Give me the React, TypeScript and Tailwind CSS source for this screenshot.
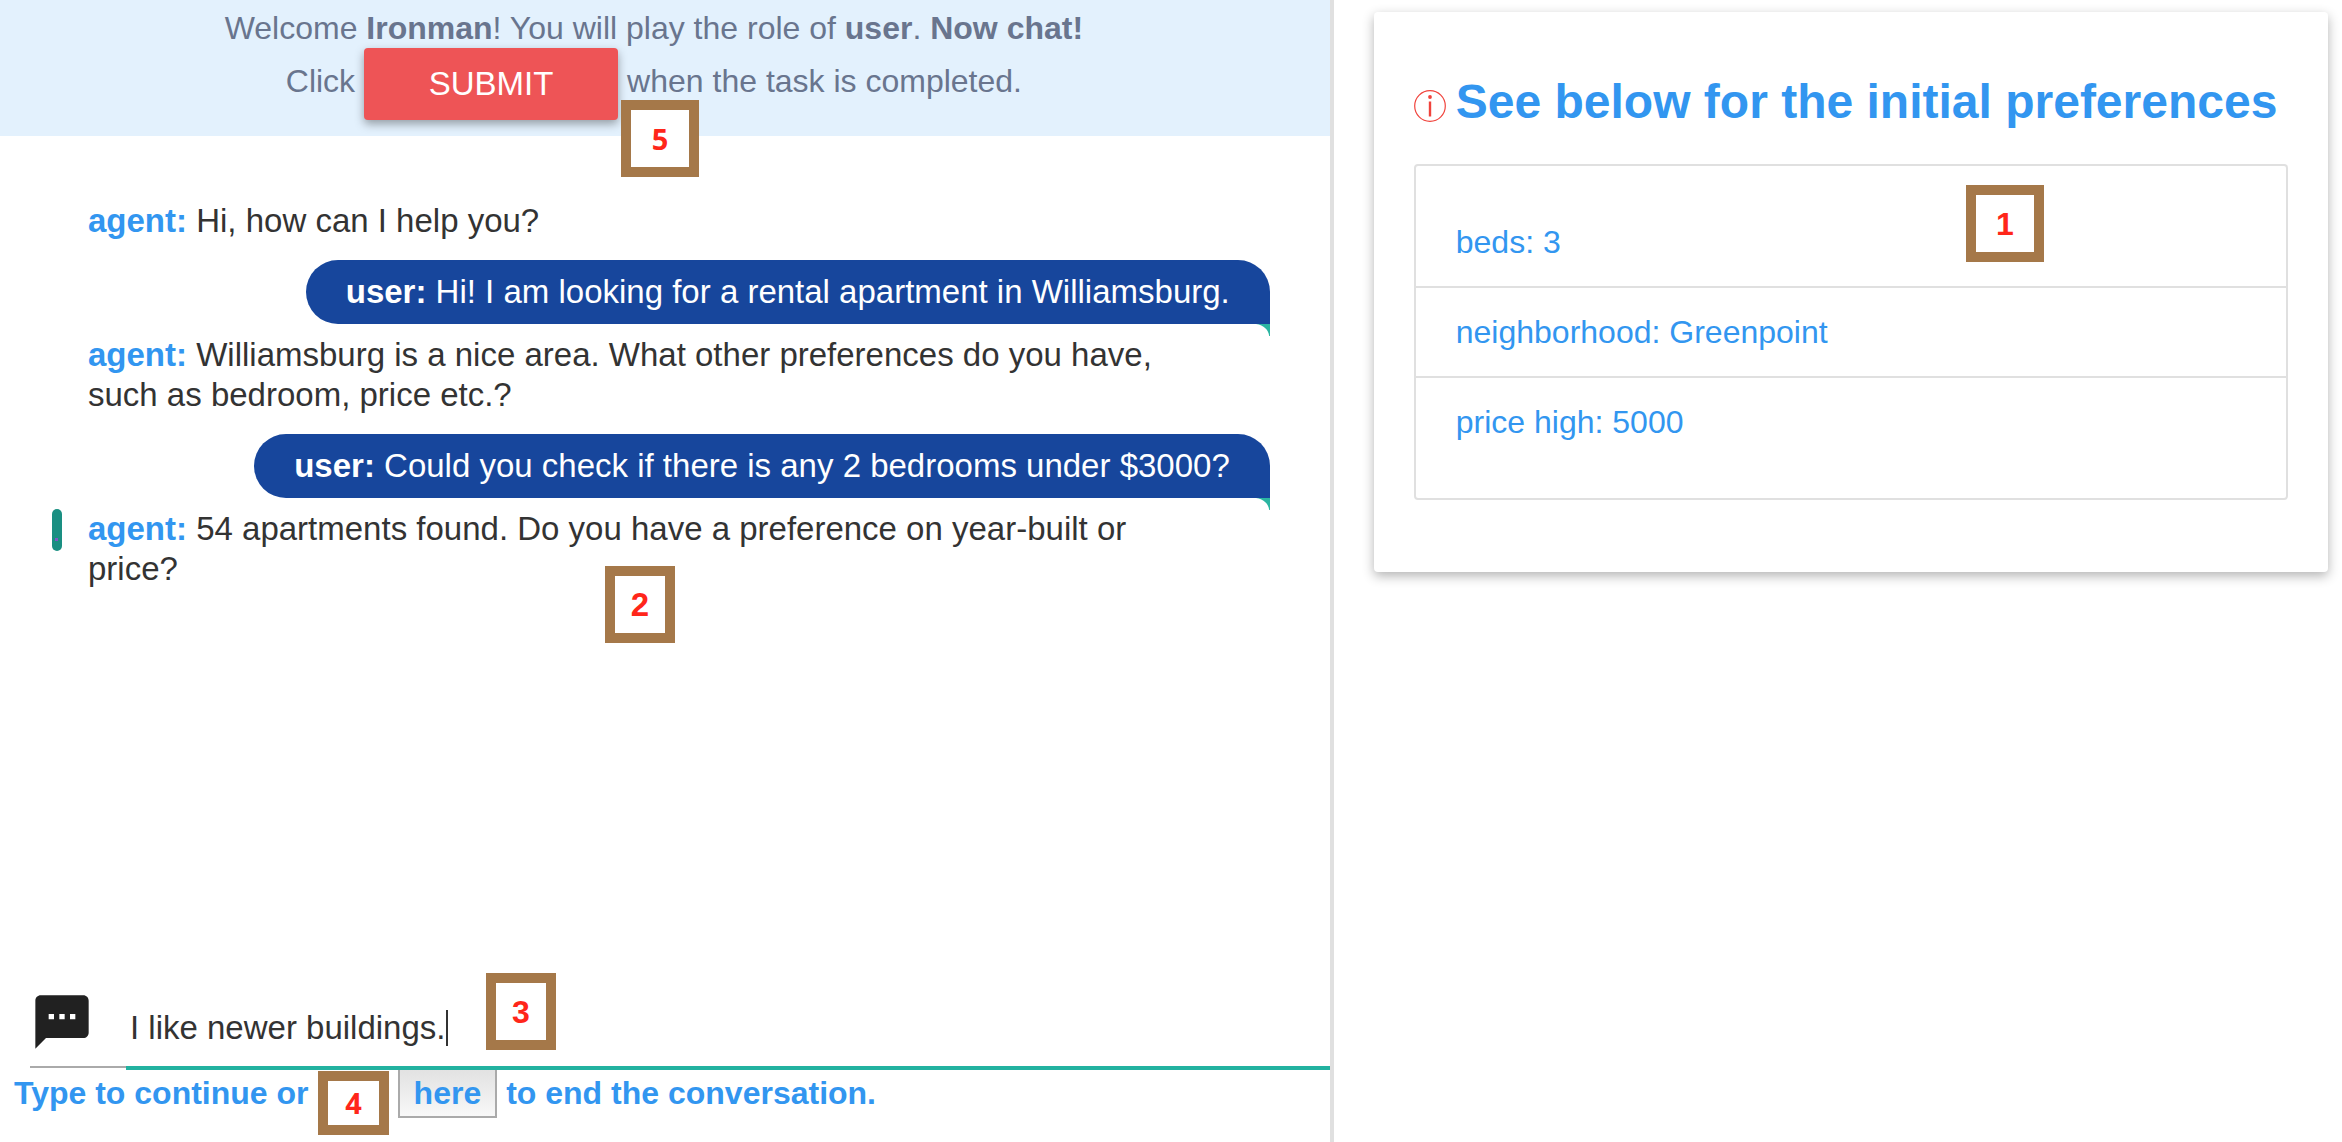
import type { ReactNode } from "react";
import { MdTextsms } from "react-icons/md";

function Marker({ n, className }: { n: number; className: string }) {
  return (
    <div
      className={`absolute z-20 flex items-center justify-center border-[10px] border-[#a57849] bg-white font-bold text-[#ff261a] ${className}`}
    >
      {n}
    </div>
  );
}

function AgentMessage({ children, current = false }: { children: ReactNode; current?: boolean }) {
  return (
    <div className="relative max-w-[1110px] text-[#333333]">
      {current && (
        <span className="absolute top-0 -left-9 h-[42px] w-[10px] rounded-full bg-[#1a8f82]">
          <span className="absolute bottom-[10px] left-[3px] size-[3px] bg-[#7e57c2]" />
        </span>
      )}
      <b className="text-[#3296f0]">agent:</b> {children}
    </div>
  );
}

function UserMessage({ children }: { children: ReactNode }) {
  return (
    <div className="relative mt-[19px] mb-[11px] self-end rounded-[32px] rounded-br-none bg-[#17469c] px-10 py-3 text-white">
      <b>user:</b> {children}
      <svg className="absolute top-full right-0 h-3 w-[14px]" viewBox="0 0 14 12" aria-hidden="true">
        <path d="M0 0H14V12H13.2C12.5 6 8 1 0 0Z" fill="#2bb5a2" />
      </svg>
    </div>
  );
}

function InfoIcon() {
  return (
    <svg className="mb-[10px] size-8 shrink-0 self-end" viewBox="0 0 32 32" fill="none" aria-hidden="true">
      <circle cx="16" cy="16" r="15.3" stroke="#f0433c" strokeWidth="1.2" />
      <circle cx="16" cy="7" r="1.9" fill="#f0433c" />
      <path d="M16 11.5V26.5" stroke="#f0433c" strokeWidth="2.4" />
    </svg>
  );
}

export default function App() {
  return (
    <div className="flex min-h-screen bg-white font-['Liberation_Sans',Arial,sans-serif] text-[32px] leading-10">
      <main className="flex w-[56.95%] flex-col border-r-4 border-[#e0e0e0]">
        <header className="relative bg-[#e3f1fd] pt-2 pr-[22px] pb-4 text-center text-[#69758e]">
          <p>
            Welcome <b>Ironman</b>! You will play the role of <b>user</b>. <b>Now chat!</b>
          </p>
          <div className="flex items-start justify-center gap-[9px] leading-[66px]">
            <span>Click</span>
            <button
              type="button"
              className="h-[72px] w-[254px] rounded bg-[#ee5456] text-[33px] leading-[72px] text-white shadow-[0_4px_10px_rgba(0,0,0,0.35)]"
            >
              SUBMIT
            </button>
            <span>when the task is completed.</span>
          </div>
          <Marker n={5} className="top-[100px] left-[621px] h-[77px] w-[78px] font-['Open_Sans',sans-serif] text-[29px]" />
        </header>

        <section className="relative flex flex-1 flex-col pt-[65px] pr-[60px] pl-[88px] text-[33px]">
          <AgentMessage>Hi, how can I help you?</AgentMessage>
          <UserMessage>Hi! I am looking for a rental apartment in Williamsburg.</UserMessage>
          <AgentMessage>
            Williamsburg is a nice area. What other preferences do you have, such as bedroom, price etc.?
          </AgentMessage>
          <UserMessage>Could you check if there is any 2 bedrooms under $3000?</UserMessage>
          <AgentMessage current>
            54 apartments found. Do you have a preference on year-built or price?
          </AgentMessage>
          <Marker n={2} className="top-[430px] left-[605px] h-[77px] w-[70px]" />
        </section>

        <footer className="relative">
          <div className="relative z-10 flex items-start pl-[30px]">
            <label htmlFor="message" className="w-24 border-b-2 border-[#aaaaaa] pb-3" aria-label="Message">
              <MdTextsms className="size-16 text-[#212121]" />
            </label>
            <div className="flex h-20 flex-1 items-center border-b-4 border-[#22b2a0] pl-1">
              <input
                id="message"
                type="text"
                defaultValue="I like newer buildings."
                className="field-sizing-content text-[33px] text-[#333333] caret-transparent outline-none"
              />
              <span className="h-9 w-[2px] bg-[#333333]" />
            </div>
          </div>
          <div className="flex h-[46px] items-center gap-[9px] pl-[14px] font-bold text-[#3296f0]">
            <span>Type to continue or click</span>
            <button
              type="button"
              className="h-[50px] border-2 border-[#aaaaaa] bg-linear-to-b from-[#e2e2e2] to-[#f8f8f8] px-[14px]"
            >
              here
            </button>
            <span>to end the conversation.</span>
          </div>
          <div className="h-[26px]" />
          <Marker n={3} className="bottom-[92px] left-[486px] h-[77px] w-[70px]" />
          <Marker n={4} className="bottom-[7px] left-[318px] h-16 w-[71px] font-['Open_Sans',sans-serif] text-[29px]" />
        </footer>
      </main>

      <aside className="flex-1 py-3 pr-[14px] pl-10 text-[#3296f0]">
        <div className="rounded bg-white px-10 pt-[60px] pb-[72px] shadow-[0_4px_12px_rgba(0,0,0,0.3)]">
          <h1 className="mb-8 flex h-[60px] items-center gap-[10px] text-[48px] leading-[60px] font-bold whitespace-nowrap">
            <InfoIcon />
            See below for the initial preferences
          </h1>
          <div className="relative">
            <ul className="divide-y-2 divide-[#e0e0e0] rounded border-2 border-[#e0e0e0]">
              <li className="px-10 pt-14 pb-6">beds: 3</li>
              <li className="px-10 py-6">neighborhood: Greenpoint</li>
              <li className="px-10 pt-6 pb-14">price high: 5000</li>
            </ul>
            <Marker n={1} className="top-[21px] right-[244px] h-[77px] w-[78px]" />
          </div>
        </div>
      </aside>
    </div>
  );
}
